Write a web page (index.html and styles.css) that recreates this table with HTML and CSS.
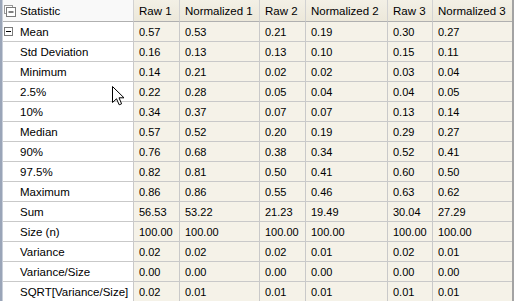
FILE: index.html
```html
<!DOCTYPE html>
<html>
<head>
<meta charset="utf-8">
<link rel="stylesheet" href="styles.css">
</head>
<body>
<div class="wrap">
  <div class="bar"></div>
  <div class="grid">
    <div class="row head">
      <div class="cell stat"><svg class="icon-h" width="12" height="12" viewBox="0 0 12 12"><rect x="0.5" y="0.5" width="8" height="8" fill="#fff" stroke="#9a9a9a"/><rect x="2.5" y="2.5" width="9" height="9" fill="#fff" stroke="#7a7a7a"/><rect x="4.5" y="6.5" width="5" height="1" fill="#000"/></svg>Statistic</div>
      <div class="cell">Raw 1</div><div class="cell">Normalized 1</div><div class="cell">Raw 2</div><div class="cell">Normalized 2</div><div class="cell">Raw 3</div><div class="cell last">Normalized 3</div>
    </div>
    <div class="row">
      <div class="cell stat first"><svg class="icon-m" width="9" height="9" viewBox="0 0 9 9"><rect x="0.5" y="0.5" width="8" height="8" fill="#fff" stroke="#7a7a7a"/><rect x="2" y="4" width="5" height="1" fill="#000"/></svg>Mean</div>
      <div class="cell">0.57</div><div class="cell">0.53</div><div class="cell">0.21</div><div class="cell">0.19</div><div class="cell">0.30</div><div class="cell last">0.27</div>
    </div>
    <div class="row"><div class="cell stat">Std Deviation</div><div class="cell">0.16</div><div class="cell">0.13</div><div class="cell">0.13</div><div class="cell">0.10</div><div class="cell">0.15</div><div class="cell last">0.11</div></div>
    <div class="row"><div class="cell stat">Minimum</div><div class="cell">0.14</div><div class="cell">0.21</div><div class="cell">0.02</div><div class="cell">0.02</div><div class="cell">0.03</div><div class="cell last">0.04</div></div>
    <div class="row"><div class="cell stat">2.5%</div><div class="cell">0.22</div><div class="cell">0.28</div><div class="cell">0.05</div><div class="cell">0.04</div><div class="cell">0.04</div><div class="cell last">0.05</div></div>
    <div class="row"><div class="cell stat">10%</div><div class="cell">0.34</div><div class="cell">0.37</div><div class="cell">0.07</div><div class="cell">0.07</div><div class="cell">0.13</div><div class="cell last">0.14</div></div>
    <div class="row"><div class="cell stat">Median</div><div class="cell">0.57</div><div class="cell">0.52</div><div class="cell">0.20</div><div class="cell">0.19</div><div class="cell">0.29</div><div class="cell last">0.27</div></div>
    <div class="row"><div class="cell stat">90%</div><div class="cell">0.76</div><div class="cell">0.68</div><div class="cell">0.38</div><div class="cell">0.34</div><div class="cell">0.52</div><div class="cell last">0.41</div></div>
    <div class="row"><div class="cell stat">97.5%</div><div class="cell">0.82</div><div class="cell">0.81</div><div class="cell">0.50</div><div class="cell">0.41</div><div class="cell">0.60</div><div class="cell last">0.50</div></div>
    <div class="row"><div class="cell stat">Maximum</div><div class="cell">0.86</div><div class="cell">0.86</div><div class="cell">0.55</div><div class="cell">0.46</div><div class="cell">0.63</div><div class="cell last">0.62</div></div>
    <div class="row"><div class="cell stat">Sum</div><div class="cell">56.53</div><div class="cell">53.22</div><div class="cell">21.23</div><div class="cell">19.49</div><div class="cell">30.04</div><div class="cell last">27.29</div></div>
    <div class="row"><div class="cell stat">Size (n)</div><div class="cell">100.00</div><div class="cell">100.00</div><div class="cell">100.00</div><div class="cell">100.00</div><div class="cell">100.00</div><div class="cell last">100.00</div></div>
    <div class="row"><div class="cell stat">Variance</div><div class="cell">0.02</div><div class="cell">0.02</div><div class="cell">0.02</div><div class="cell">0.01</div><div class="cell">0.02</div><div class="cell last">0.01</div></div>
    <div class="row"><div class="cell stat">Variance/Size</div><div class="cell">0.00</div><div class="cell">0.00</div><div class="cell">0.00</div><div class="cell">0.00</div><div class="cell">0.00</div><div class="cell last">0.00</div></div>
    <div class="row"><div class="cell stat">SQRT[Variance/Size]</div><div class="cell">0.02</div><div class="cell">0.01</div><div class="cell">0.01</div><div class="cell">0.01</div><div class="cell">0.01</div><div class="cell last">0.01</div></div>
  </div>
</div>
<svg class="cursor" width="13" height="20" viewBox="0 0 13 20"><path d="M0.5 0.5 L0.5 16.5 L4.5 12.8 L7.2 18.8 L9.6 17.8 L7 11.8 L12 11.8 Z" fill="#fff" stroke="#000" stroke-width="1" stroke-linejoin="miter"/></svg>
</body>
</html>
```

FILE: styles.css
```css
html, body {
  margin: 0;
  padding: 0;
  background: #fff;
  overflow: hidden;
}
body {
  font-family: "Liberation Sans", Arial, sans-serif;
  font-size: 11px;
  color: #000;
}
.wrap {
  display: flex;
  align-items: stretch;
  height: 301px;
}
.bar {
  width: 3px;
  background: linear-gradient(to right, #9aa5b8 0, #9aa5b8 2px, #c9cfd9 2px);
  flex: none;
}
.grid {
  display: grid;
  grid-template-columns: 131px 46px 80px 46px 82px 45px 79px;
  grid-template-rows: 22px repeat(14, 20px);
  border-right: 2px solid #a3a3a3;
  align-self: flex-start;
}
.row {
  display: contents;
}
.cell {
  box-sizing: border-box;
  display: flex;
  align-items: center;
  padding-left: 5px;
  background: #f5f2e8;
  border-right: 1px solid #c9c9c9;
  border-bottom: 1px solid #c9c9c9;
  white-space: nowrap;
  overflow: hidden;
}
.cell.last {
  border-right: none;
}
.cell.stat {
  background: #fff;
  padding-left: 17px;
  font-size: 11.5px;
}
.head .cell {
  background: linear-gradient(#f3f0e6, #ece8da);
  border-bottom-color: #b0b0b0;
  border-right-color: #d2d2d2;
  font-size: 11.5px;
}
.head .cell.stat {
  background: #f9f9f9;
  padding-left: 1px;
}
.icon-h {
  margin-right: 4px;
  flex: none;
}
.cell.first {
  padding-left: 1px;
}
.icon-m {
  margin-right: 7px;
  flex: none;
}
.cursor {
  position: absolute;
  left: 112px;
  top: 86px;
}
```
